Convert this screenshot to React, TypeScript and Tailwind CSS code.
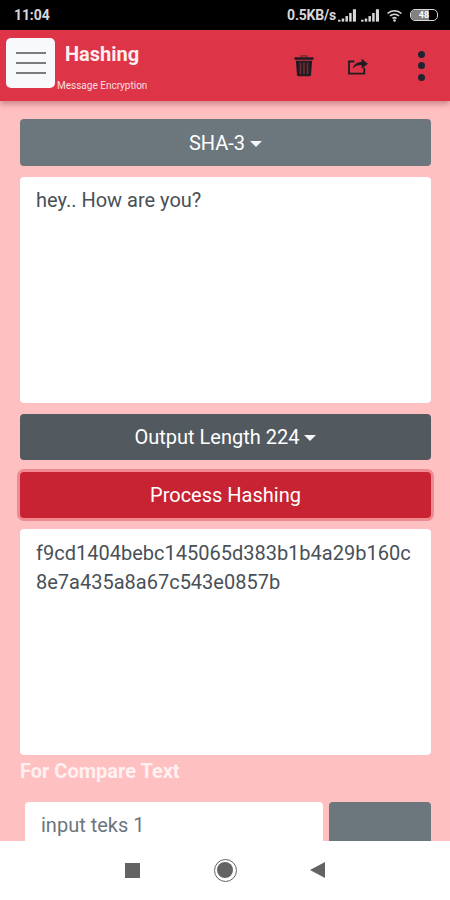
import React from "react";

const Caret = () => (
  <span className="inline-block ml-[5px] align-[3px] w-0 h-0 border-x-[6px] border-x-transparent border-t-[6px] border-t-white/95" />
);

function Signal() {
  return (
    <svg width="18" height="14" viewBox="0 0 14.5 11.3" fill="#d8d8d8">
      <rect x="0" y="9.5" width="2" height="1.5" />
      <rect x="3" y="8.5" width="2" height="2.5" />
      <rect x="6" y="6.5" width="2" height="4.5" />
      <rect x="9" y="4" width="2" height="7" />
      <rect x="12" y="1" width="2.5" height="10" />
    </svg>
  );
}

export default function App() {
  return (
    <div className="w-[450px] h-[900px] flex flex-col overflow-hidden bg-[#ffc0c1] font-['Roboto',sans-serif]">
      <div className="h-[30px] shrink-0 bg-black flex items-center pl-[14px] pr-[12px] text-[#d8d8d8] text-[14px] font-bold">
        <span className="tracking-[-0.1px]">11:04</span>
        <div className="ml-auto flex items-center">
          <span className="tracking-[-0.2px]">0.5KB/s</span>
          <span className="ml-[2px] flex"><Signal /></span>
          <span className="ml-[5px] flex"><Signal /></span>
          <svg className="ml-[7px]" width="17" height="13" viewBox="0 0 16 13" fill="none" stroke="#d8d8d8" strokeWidth="1.5">
            <path d="M1 4.5a10 10 0 0 1 14 0" />
            <path d="M3.5 7a6.5 6.5 0 0 1 9 0" />
            <path d="M6 9.5a3 3 0 0 1 4 0" />
            <circle cx="8" cy="11.5" r="0.6" fill="#d8d8d8" />
          </svg>
          <div className="ml-[7px] relative w-[28px] h-[12px] rounded-[5px] border border-[#d8d8d8] flex items-center justify-center overflow-hidden text-[9px] leading-none text-white">
            <div className="absolute left-0 top-0 bottom-0 w-[18px] bg-[#b8b8b8]/70" />
            <span className="relative">48</span>
          </div>
        </div>
      </div>

      <div className="h-[71px] shrink-0 bg-[#dd3547] flex items-start shadow-[0_3px_6px_rgba(130,40,50,0.4)] relative z-10">
        <button className="ml-[6px] mt-[8px] w-[49px] h-[50px] rounded-[5px] bg-[#f8f9fa] flex flex-col items-center justify-center gap-[8px]">
          <span className="block w-[30px] h-[2px] bg-[#7a7d80]" />
          <span className="block w-[30px] h-[2px] bg-[#7a7d80]" />
          <span className="block w-[30px] h-[2px] bg-[#7a7d80]" />
        </button>
        <div className="flex flex-col">
          <span className="ml-[10px] mt-[11px] text-[20px] leading-[26px] font-bold text-[#fdeef0]">Hashing</span>
          <span className="ml-[2px] mt-[13px] text-[10px] leading-[12px] text-[#fbdde0]">Message Encryption</span>
        </div>
        <div className="ml-auto h-full flex items-center text-[#1d2327]">
          <svg width="22" height="23" viewBox="0 0 22 24" fill="#1f1d22">
            <path d="M8 3.5V2h6v1.5" fill="none" stroke="#6b2a33" strokeWidth="1.2" />
            <rect x="1" y="3.5" width="20" height="2.5" rx="0.8" />
            <path d="M2.5 7h17l-1.2 15.2a1.2 1.2 0 0 1-1.2 1H4.9a1.2 1.2 0 0 1-1.2-1z" />
            <rect x="6.5" y="9" width="1.6" height="12" fill="#7b2c36" />
            <rect x="10.2" y="9" width="1.6" height="12" fill="#7b2c36" />
            <rect x="13.9" y="9" width="1.6" height="12" fill="#7b2c36" />
          </svg>
          <svg className="ml-[31px]" width="24" height="18" viewBox="0 0 24 20" fill="none">
            <path d="M8 5H2v13.5h17V12" stroke="#1f1d22" strokeWidth="2" />
            <path d="M6 13c1-5 5-7.5 10-7.5V2l7 5.5-7 5.5V9c-4 0-7.5 1-10 4z" fill="#1f1d22" />
          </svg>
          <div className="ml-[48px] mr-[25px] flex flex-col gap-[4.5px]">
            <span className="block w-[7px] h-[7px] rounded-full bg-[#1f2430]" />
            <span className="block w-[7px] h-[7px] rounded-full bg-[#1f2430]" />
            <span className="block w-[7px] h-[7px] rounded-full bg-[#1f2430]" />
          </div>
        </div>
      </div>

      <div className="flex-1 min-h-0 overflow-hidden px-[20px] pt-[18px] pr-[19px]">
        <button className="w-full h-[47px] rounded-[4px] bg-[#6b767d] text-white text-[20px]">
          SHA-3<Caret />
        </button>
        <div className="mt-[11px] h-[226px] rounded-[4px] bg-white px-[16px] py-[11px] text-[20px] leading-[24px] text-[#495057]">
          hey.. How are you?
        </div>
        <button className="mt-[11px] w-full h-[46px] rounded-[4px] bg-[#52595f] text-white text-[20px]">
          Output Length 224<Caret />
        </button>
        <button className="mt-[12px] w-full h-[46px] rounded-[4px] bg-[#c82333] text-white text-[20px] shadow-[0_0_0_3px_rgba(225,83,97,0.5)]">
          Process Hashing
        </button>
        <div className="mt-[11px] h-[226px] rounded-[4px] bg-white px-[16px] py-[10px] text-[20px] leading-[29px] text-[#495057] break-all">
          f9cd1404bebc145065d383b1b4a29b160c8e7a435a8a67c543e0857b
        </div>
        <div className="mt-[4px] text-[20px] leading-[24px] font-bold text-[#fff1f1]">For Compare Text</div>
        <div className="mt-[19px] pl-[5px] flex gap-[6px]">
          <div className="w-[298px] h-[60px] rounded-[4px] bg-white pl-[16px] pt-[11px] text-[20px] leading-[24px] text-[#6c757d]">
            input teks 1
          </div>
          <div className="flex-1 h-[60px] rounded-[4px] bg-[#6b767d]" />
        </div>
      </div>

      <div className="h-[59px] shrink-0 bg-white flex items-center justify-center gap-[74px] pb-[1px]">
        <span className="block w-[15px] h-[15px] bg-[#636363]" />
        <span className="w-[23px] h-[23px] rounded-full border-[1.5px] border-[#636363] flex items-center justify-center">
          <span className="block w-[16px] h-[16px] rounded-full bg-[#636363]" />
        </span>
        <svg className="-ml-[1px] mr-[1px]" width="15" height="16" viewBox="0 0 15 16" fill="#636363"><path d="M0 8 15 0v16z" /></svg>
      </div>
    </div>
  );
}
